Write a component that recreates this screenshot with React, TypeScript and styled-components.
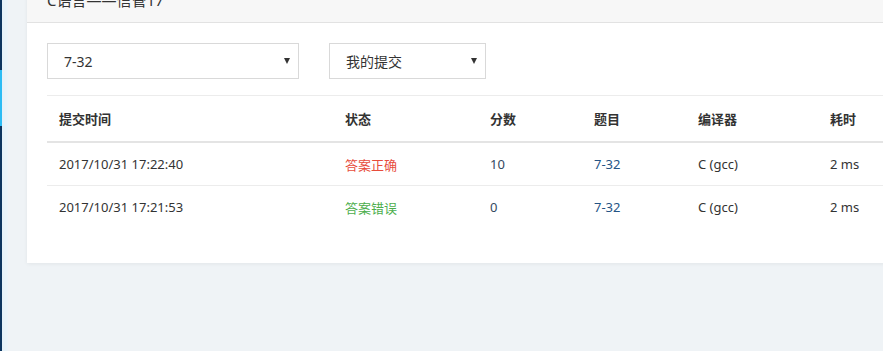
import { createGlobalStyle, styled } from "styled-components";

const GlobalStyle = createGlobalStyle`
    html, body {
        margin: 0;
        padding: 0;
        background: #eff3f6;
        overflow: hidden;
        font-family: "Noto Sans", "Noto Sans CJK SC", sans-serif;
        color: #333;
    }
`;

const Page = styled.div`
    display: flex;
    height: 351px;
    overflow: hidden;
`;

const SideEdge = styled.div`
    flex-shrink: 0;
    width: 2px;
    display: flex;
    flex-direction: column;
    background: #0c355f;
`;

const SideHighlight = styled.div`
    margin-top: 70px;
    height: 56px;
    background: #2bbcf4;
`;

const SideGlow = styled.div`
    flex-shrink: 0;
    width: 6px;
    background: linear-gradient(90deg, #e4f1f9, #ebf4f9);
`;

const Main = styled.div`
    flex-shrink: 0;
    padding-left: 19px;
`;

const Card = styled.div`
    width: 900px;
    margin-top: -24px;
    background: #fff;
    box-shadow: 0 1px 4px rgba(0, 0, 0, 0.06);
`;

const CardHeader = styled.div`
    height: 46px;
    display: flex;
    align-items: center;
    padding-left: 20px;
    background: #f7f7f7;
    border-bottom: 1px solid #e2e2e2;
    font-size: 15px;
    color: #333;
`;

const CardBody = styled.div`
    padding: 20px 0 35px 20px;
`;

const Filters = styled.div`
    display: flex;
    gap: 30px;
    padding-bottom: 16px;
    border-bottom: 1px solid #ececec;
`;

const Select = styled.div<{ $width: number }>`
    width: ${(p) => p.$width}px;
    height: 36px;
    box-sizing: border-box;
    border: 1px solid #d9d9d9;
    display: flex;
    align-items: center;
    justify-content: space-between;
    padding: 0 8px 0 16px;
    font-size: 14px;
    color: #333;
`;

const Caret = styled.span`
    width: 0;
    height: 0;
    border-left: 3px solid transparent;
    border-right: 3px solid transparent;
    border-top: 6px solid #333;
`;

const Table = styled.table`
    width: 880px;
    border-collapse: collapse;
    font-size: 13px;
    table-layout: fixed;
`;

const Th = styled.th<{ $width?: number }>`
    width: ${(p) => (p.$width ? `${p.$width}px` : "auto")};
    text-align: left;
    font-weight: bold;
    padding: 0 12px;
    height: 45px;
    border-bottom: 2px solid #e4e4e4;
    color: #333;
`;

const Td = styled.td`
    padding: 0 12px;
    height: 42px;
    border-bottom: 1px solid #ececec;
    color: #333;
    white-space: nowrap;
`;

const LastRow = styled.tr`
    td {
        border-bottom: none;
    }
`;

const Status = styled.span<{ $ok: boolean }>`
    color: ${(p) => (p.$ok ? "#e74c3c" : "#4cae4c")};
`;

const Score = styled.span`
    color: #34495e;
`;

const Link = styled.span`
    color: #255485;
`;

const rows = [
    { time: "2017/10/31 17:22:40", ok: true, status: "答案正确", score: "10", problem: "7-32", compiler: "C (gcc)", cost: "2 ms" },
    { time: "2017/10/31 17:21:53", ok: false, status: "答案错误", score: "0", problem: "7-32", compiler: "C (gcc)", cost: "2 ms" },
];

export default function App() {
    return (
        <>
            <GlobalStyle />
            <Page>
                <SideEdge>
                    <SideHighlight />
                </SideEdge>
                <SideGlow />
                <Main>
                    <Card>
                        <CardHeader>C语言——信管17</CardHeader>
                        <CardBody>
                            <Filters>
                                <Select $width={252}>
                                    <span>7-32</span>
                                    <Caret />
                                </Select>
                                <Select $width={157}>
                                    <span>我的提交</span>
                                    <Caret />
                                </Select>
                            </Filters>
                            <Table>
                                <thead>
                                    <tr>
                                        <Th $width={262}>提交时间</Th>
                                        <Th $width={121}>状态</Th>
                                        <Th $width={80}>分数</Th>
                                        <Th $width={80}>题目</Th>
                                        <Th $width={108}>编译器</Th>
                                        <Th>耗时</Th>
                                    </tr>
                                </thead>
                                <tbody>
                                    {rows.map((r, i) => {
                                        const cells = (
                                            <>
                                                <Td>{r.time}</Td>
                                                <Td><Status $ok={r.ok}>{r.status}</Status></Td>
                                                <Td><Score>{r.score}</Score></Td>
                                                <Td><Link>{r.problem}</Link></Td>
                                                <Td>{r.compiler}</Td>
                                                <Td>{r.cost}</Td>
                                            </>
                                        );
                                        return i === rows.length - 1
                                            ? <LastRow key={i}>{cells}</LastRow>
                                            : <tr key={i}>{cells}</tr>;
                                    })}
                                </tbody>
                            </Table>
                        </CardBody>
                    </Card>
                </Main>
            </Page>
        </>
    );
}
